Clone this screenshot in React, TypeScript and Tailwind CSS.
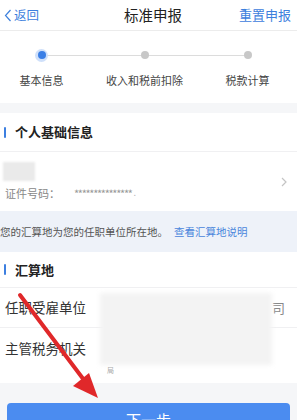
import React from 'react';

const steps = [
    { label: '基本信息', active: true },
    { label: '收入和税前扣除', active: false },
    { label: '税款计算', active: false },
];

const SectionTitle: React.FC<{ title: string; className?: string }> = ({ title, className }) => (
    <div className={`flex items-center border-b border-[#f0f0f2] ${className ?? ''}`}>
        <span className="ml-[4px] w-[2px] h-[11px] rounded-sm bg-[#3d7fe0]" />
        <span className="ml-[9px] text-[13px] font-bold text-[#222]">{title}</span>
    </div>
);

export default function App() {
    return (
        <div
            className="relative w-[297px] h-[420px] overflow-hidden bg-[#f5f6f8]"
            style={{ fontFamily: '"Noto Sans CJK SC", "Noto Sans", sans-serif' }}
        >
            {/* Header */}
            <header className="h-[31px] bg-white border-b border-[#ececec] flex items-center justify-between px-[4px]">
                <div className="flex items-center text-[#3d80dd] text-[12.5px]">
                    <svg width="8" height="13" viewBox="0 0 8 13" className="mr-[2px]">
                        <path d="M6.5 1 L1.5 6.5 L6.5 12" fill="none" stroke="#3d80dd" strokeWidth="1.2" />
                    </svg>
                    <span>返回</span>
                </div>
                <h1 className="text-[14.5px] text-[#222] ml-[28px]">标准申报</h1>
                <span className="text-[13px] text-[#3d80dd] mr-[2px]">重置申报</span>
            </header>

            {/* Steps */}
            <div className="h-[72px] bg-white relative">
                <div className="absolute left-[42px] right-[49px] top-[23.5px] h-px bg-[#dcdcdc]" />
                <div className="grid grid-cols-3 w-[309px] ml-[-10px] pt-[17px]">
                    {steps.map(({ label, active }) => (
                        <div key={label} className="flex flex-col items-center">
                            <div className="h-[14px] flex items-center justify-center relative">
                                {active ? (
                                    <span className="w-[13px] h-[13px] rounded-full bg-[#cfe0fa] flex items-center justify-center">
                                        <span className="w-[8px] h-[8px] rounded-full bg-[#3b7fe6]" />
                                    </span>
                                ) : (
                                    <span className="w-[8px] h-[8px] rounded-full bg-[#c8c8c8]" />
                                )}
                            </div>
                            <span className="mt-[10px] text-[11px] text-[#444]">{label}</span>
                        </div>
                    ))}
                </div>
            </div>

            <div className="h-[10px]" />

            {/* Personal info */}
            <section className="bg-white">
                <SectionTitle title="个人基础信息" className="h-[39px]" />
                <div className="h-[59px] flex items-center justify-between pl-[3px] pr-[10px]">
                    <div className="flex flex-col">
                        <div className="w-[32px] h-[19px] bg-[#eaeaea] blur-[1px]" />
                        <div className="flex items-center mt-[4px] text-[11px] text-[#888]">
                            <span className="ml-[2px]">证件号码：</span>
                            <span className="ml-[14px] text-[11px] tracking-[-1.3px] text-[#999]">***************</span>
                            <span className="text-[9px] text-[#bbb] ml-[2px]">.</span>
                        </div>
                    </div>
                    <svg width="6" height="10" viewBox="0 0 6 10">
                        <path d="M1 1 L5 5 L1 9" fill="none" stroke="#c4c4c4" strokeWidth="1.2" />
                    </svg>
                </div>
            </section>

            {/* Tip band */}
            <div className="h-[41px] bg-[#eef2f9] flex items-center text-[10.5px] whitespace-nowrap">
                <span className="text-[#555]">您的汇算地为您的任职单位所在地。</span>
                <span className="ml-[6px] text-[#4a86dc]">查看汇算地说明</span>
            </div>

            {/* Settlement place */}
            <section className="bg-white relative pb-[15px]">
                <SectionTitle title="汇算地" className="h-[36px]" />
                <div className="h-[40px] flex items-center border-b border-[#f0f0f2] pl-[5px] pr-[12px] justify-between">
                    <span className="text-[13.5px] text-[#333]">任职受雇单位</span>
                    <span className="text-[13px] text-[#888]">司</span>
                </div>
                <div className="h-[40px] flex items-center pl-[5px]">
                    <span className="text-[13.5px] text-[#333]">主管税务机关</span>
                </div>
                <div className="absolute left-[100px] top-[41px] w-[172px] h-[72px] bg-[#f3f3f3] blur-[2px]" />
                <span className="absolute left-[107px] top-[113px] text-[7px] text-[#aaa]">局</span>
            </section>

            {/* Next button */}
            <div className="pt-[20px] px-[7px]">
                <button className="w-full h-[40px] rounded-[4px] bg-[#4b8cf0] text-white text-[15px] flex justify-center pt-[6px]">
                    下一步
                </button>
            </div>

            {/* Red arrow annotation */}
            <svg className="absolute inset-0 pointer-events-none" width="297" height="420" viewBox="0 0 297 420">
                <line x1="20" y1="295" x2="90" y2="388" stroke="#e0282a" strokeWidth="4" strokeLinecap="round" />
                <polygon points="98,398 73,386 89,373" fill="#e0282a" />
            </svg>
        </div>
    );
}
